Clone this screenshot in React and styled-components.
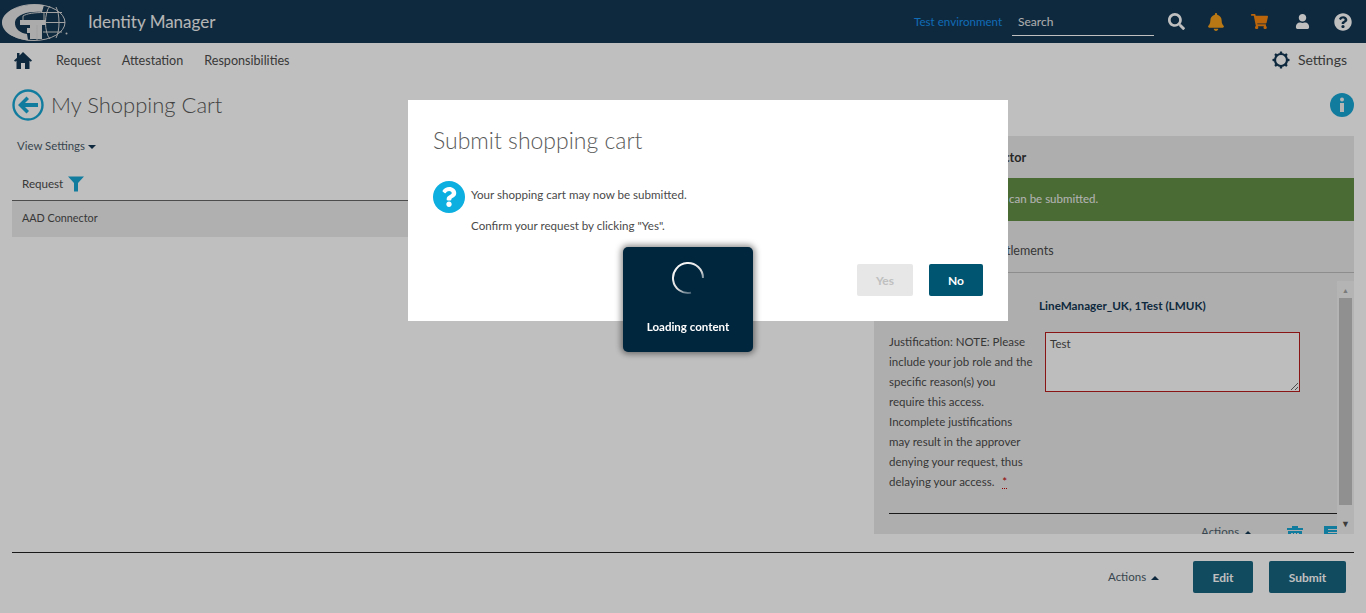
import React from "react";
import styled, { createGlobalStyle } from "styled-components";
import { FaSearch, FaBell, FaShoppingCart, FaUser, FaQuestionCircle, FaQuestion } from "react-icons/fa";

const GlobalStyle = createGlobalStyle`
  html, body { margin: 0; padding: 0; height: 100%; overflow: hidden; background: #fff; }
  body { font-family: "Lato", "Liberation Sans", sans-serif; color: #4a4a4a; }
  * { box-sizing: border-box; }
`;

function Logo() {
  return (
    <svg width="68" height="43" viewBox="0 0 68 43">
      <ellipse cx="34" cy="22.500" rx="31" ry="18" fill="none" stroke="#d8d8d8" strokeWidth="1" />
      <path d="M2 22.500C2 12 17 4.500 38 4.500L44 5 42 12C30 11 16 14 15 22 14.500 29 20 33 27 34L28 40 38 41C16 41 2 33 2 22.500Z" fill="#e4e4e4" />
      <path d="M20 20H46V25H42V39H30V33H27V28H30V25H20Z" fill="#e4e4e4" />
      <path d="M23 20V16C27 13.500 34 12.500 44 12.500V20M37 25V40M50 6C44 12 44 33 50 39M43 12.500H62M46 22.500H65M43 32H62M56 7C60 14 60 31 56 38" fill="none" stroke="#d8d8d8" strokeWidth="1" />
      <circle cx="66.500" cy="33.500" r="1" fill="#d8d8d8" />
    </svg>
  );
}

function Home() {
  return (
    <svg width="18" height="17" viewBox="0 0 18 17">
      <path d="M9 0L18 8.500 16.800 9.800 15.500 8.700V17H11V11H7V17H2.500V8.700L1.200 9.800 0 8.500 3 5.700V1H5.500V3.400Z" fill="#133753" />
    </svg>
  );
}

function Gear() {
  const teeth = [0, 45, 90, 135, 180, 225, 270, 315];
  return (
    <svg width="18" height="18" viewBox="0 0 18 18">
      <circle cx="9" cy="9" r="6" fill="none" stroke="#133753" strokeWidth="2.200" />
      <g fill="#133753">
        {teeth.map((a) => (
          <rect key={a} x="7.800" y="0.500" width="2.400" height="3" rx="0.600" transform={`rotate(${a} 9 9)`} />
        ))}
      </g>
    </svg>
  );
}

function BackArrow() {
  return (
    <svg width="32" height="32" viewBox="0 0 32 32">
      <circle cx="16" cy="16" r="14.500" fill="none" stroke="#19a6d4" strokeWidth="2.400" />
      <path d="M6 16L14.500 7.500 17 10 13 14H26V18H13L17 22 14.500 24.500Z" fill="#19a6d4" />
    </svg>
  );
}

function Info() {
  return (
    <svg width="24" height="24" viewBox="0 0 24 24">
      <circle cx="12" cy="12" r="12" fill="#19a6d4" />
      <circle cx="12" cy="6.500" r="2" fill="#f2f2f2" />
      <rect x="10" y="10" width="4" height="9" fill="#f2f2f2" />
    </svg>
  );
}

function Funnel() {
  return (
    <svg width="16" height="16" viewBox="0 0 16 16">
      <path d="M0 0.500H16L10 7V15.500H6V7Z" fill="#19a6d4" />
    </svg>
  );
}

function Trash() {
  return (
    <svg width="16" height="18" viewBox="0 0 16 18">
      <path d="M0 2H5V0H11V2H16V4H0ZM1 5H15V18H1ZM4 7V16H6V7ZM7 7V16H9V7ZM10 7V16H12V7Z" fill="#19a6d4" fillRule="evenodd" />
    </svg>
  );
}

function ListBox() {
  return (
    <svg width="14" height="18" viewBox="0 0 14 18">
      <path d="M0 0H14V18H0ZM4 3V4H14V3ZM4 6V7H14V6ZM4 9V10H14V9Z" fill="#19a6d4" fillRule="evenodd" />
    </svg>
  );
}

function Spinner() {
  return (
    <svg width="34" height="34" viewBox="0 0 34 34">
      <defs>
        <linearGradient id="spinFade" x1="0" y1="0" x2="0.800" y2="1">
          <stop offset="0" stopColor="#ffffff" />
          <stop offset="0.600" stopColor="#dddddd" />
          <stop offset="1" stopColor="#ffffff" stopOpacity="0.050" />
        </linearGradient>
      </defs>
      <path d="M32 17A15 15 0 1 0 20 31.700" fill="none" stroke="url(#spinFade)" strokeWidth="2" />
    </svg>
  );
}

const approverNote = [
  "Justification: NOTE: Please",
  "include your job role and the",
  "specific reason(s) you",
  "require this access.",
  "Incomplete justifications",
  "may result in the approver",
  "denying your request, thus",
];

export default function App() {
  return (
    <>
      <GlobalStyle />
      <Page>
        <TopBar>
          <LogoSlot><Logo /></LogoSlot>
          <Brand>Identity Manager</Brand>
          <TopRight>
            <EnvLabel>Test environment</EnvLabel>
            <SearchBox>Search</SearchBox>
            <TopIcons>
              <TopIcon $w={44} $color="#ffffff" $size={17}><FaSearch /></TopIcon>
              <TopIcon $w={36} $color="#f9a11b" $size={18}><FaBell /></TopIcon>
              <TopIcon $w={50} $color="#f9860f" $size={17}><FaShoppingCart /></TopIcon>
              <TopIcon $w={36} $color="#ffffff" $size={15}><FaUser /></TopIcon>
              <TopIcon $w={46} $color="#ffffff" $size={18}><FaQuestionCircle /></TopIcon>
            </TopIcons>
          </TopRight>
        </TopBar>

        <NavBar>
          <HomeSlot><Home /></HomeSlot>
          <NavLink>Request</NavLink>
          <NavLink>Attestation</NavLink>
          <NavLink>Responsibilities</NavLink>
          <SettingsLink><Gear /><span>Settings</span></SettingsLink>
        </NavBar>

        <TitleRow>
          <BackArrow />
          <PageTitle>My Shopping Cart</PageTitle>
          <InfoSlot><Info /></InfoSlot>
        </TitleRow>

        <Main>
          <LeftCol>
            <ViewSettings>View Settings <Caret /></ViewSettings>
            <TableHead>Request <Funnel /></TableHead>
            <TableRow>AAD Connector</TableRow>
          </LeftCol>

          <DetailPanel>
            <DetailTitle>Product AAD Connector</DetailTitle>
            <GreenBand>Your shopping cart can be submitted.</GreenBand>
            <TabRow>Show dependent entitlements</TabRow>
            <ScrollWrap>
              <ScrollBody>
                <ApproverRow>LineManager_UK, 1Test (LMUK)</ApproverRow>
                <FieldRow>
                  <FieldLabel>
                    {approverNote.map((line) => (
                      <div key={line}>{line}</div>
                    ))}
                    <div>delaying your access. <Required>*</Required></div>
                  </FieldLabel>
                  <FieldInput readOnly defaultValue="Test" />
                </FieldRow>
                <DetailActions>
                  <ActionsText>Actions <UpCaret /></ActionsText>
                  <ActionIcon $left={35}><Trash /></ActionIcon>
                  <ActionIcon $left={21}><ListBox /></ActionIcon>
                </DetailActions>
              </ScrollBody>
              <ScrollBar>
                <ScrollArrow>&#9650;</ScrollArrow>
                <ScrollThumb />
                <ScrollArrow $dark>&#9660;</ScrollArrow>
              </ScrollBar>
            </ScrollWrap>
          </DetailPanel>
        </Main>

        <Footer>
          <FooterActions>Actions <UpCaret /></FooterActions>
          <FootButton $width={60}>Edit</FootButton>
          <FootButton $width={77}>Submit</FootButton>
        </Footer>
      </Page>

      <Overlay />

      <Modal>
        <ModalTitle>Submit shopping cart</ModalTitle>
        <ModalBody>
          <QuestionBadge><FaQuestion /></QuestionBadge>
          <ModalText>
            <p>Your shopping cart may now be submitted.</p>
            <p>Confirm your request by clicking "Yes".</p>
          </ModalText>
        </ModalBody>
        <ModalButtons>
          <DialogButton $disabled>Yes</DialogButton>
          <DialogButton>No</DialogButton>
        </ModalButtons>
      </Modal>

      <LoadingBox>
        <Spinner />
        <LoadingText>Loading content</LoadingText>
      </LoadingBox>
    </>
  );
}

const Page = styled.div`
  height: 613px;
  display: flex;
  flex-direction: column;
  overflow: hidden;
`;

const TopBar = styled.header`
  height: 43px;
  flex: none;
  display: flex;
  align-items: center;
  background: #133753;
`;

const LogoSlot = styled.div`
  width: 88px;
  height: 43px;
`;

const Brand = styled.div`
  font-size: 17px;
  color: #f2f2f2;
`;

const TopRight = styled.div`
  margin-left: auto;
  display: flex;
  align-items: center;
`;

const EnvLabel = styled.span`
  font-size: 11.600px;
  color: #1690f0;
  width: 98px;
`;

const SearchBox = styled.div`
  width: 142px;
  height: 28px;
  padding: 6px 6px 0;
  font-size: 12px;
  color: #e8e8e8;
  border-bottom: 1px solid #ffffff;
`;

const TopIcons = styled.div`
  display: flex;
  align-items: center;
  width: 212px;
`;

const TopIcon = styled.span`
  width: ${(p) => p.$w}px;
  height: 24px;
  flex: none;
  display: flex;
  align-items: center;
  justify-content: center;
  color: ${(p) => p.$color};
  font-size: ${(p) => p.$size}px;
`;

const NavBar = styled.nav`
  height: 35px;
  flex: none;
  display: flex;
  align-items: center;
  padding: 0 19px 0 14px;
  font-size: 12.600px;
`;

const HomeSlot = styled.span`
  width: 42px;
  display: flex;
`;

const NavLink = styled.span`
  margin-right: 21px;
  color: #4c4c4c;
`;

const SettingsLink = styled.span`
  margin-left: auto;
  margin-top: -2px;
  display: flex;
  align-items: center;
  gap: 8px;
  font-size: 14px;
  color: #4c4c4c;
`;

const TitleRow = styled.div`
  height: 58px;
  flex: none;
  display: flex;
  align-items: flex-start;
  padding: 11px 12px 0;
`;

const PageTitle = styled.h1`
  margin: 0 0 0 7px;
  font-size: 22px;
  line-height: 32px;
  font-weight: 300;
  color: #5a5a5a;
`;

const InfoSlot = styled.span`
  margin-left: auto;
  margin-top: 4px;
  display: flex;
`;

const Main = styled.main`
  height: 398px;
  flex: none;
  display: flex;
  justify-content: space-between;
  padding: 0 12px;
`;

const LeftCol = styled.section`
  width: 848px;
`;

const ViewSettings = styled.div`
  padding: 3px 0 0 5px;
  height: 33px;
  font-size: 11.400px;
  line-height: 14px;
  color: #4c5d6a;
`;

const Caret = styled.i`
  display: inline-block;
  margin-left: 0;
  vertical-align: middle;
  border: 4px solid transparent;
  border-top-color: #133753;
  border-bottom-width: 0;
`;

const UpCaret = styled.i`
  display: inline-block;
  margin-left: 2px;
  vertical-align: middle;
  border: 4px solid transparent;
  border-bottom-color: #133753;
  border-top-width: 0;
`;

const TableHead = styled.div`
  height: 32px;
  display: flex;
  align-items: center;
  gap: 5px;
  padding: 0 10px 2px;
  font-size: 11.600px;
  color: #4c4c4c;
  border-bottom: 1px solid #666666;
`;

const TableRow = styled.div`
  height: 36px;
  display: flex;
  align-items: center;
  padding: 0 10px 3px;
  font-size: 10.800px;
  background: #ebebeb;
`;

const DetailPanel = styled.section`
  width: 480px;
  background: #e9e9e9;
  display: flex;
  flex-direction: column;
  overflow: hidden;
`;

const DetailTitle = styled.div`
  height: 42px;
  flex: none;
  display: flex;
  align-items: center;
  padding: 0 15px;
  font-size: 12.700px;
  font-weight: 700;
  color: #333333;
`;

const GreenBand = styled.div`
  height: 43px;
  flex: none;
  display: flex;
  align-items: center;
  padding: 0 0 2px 38px;
  font-size: 11.500px;
  color: #f0f0f0;
  background: #658f47;
`;

const TabRow = styled.div`
  height: 52px;
  flex: none;
  display: flex;
  align-items: center;
  padding: 8px 15px 0;
  font-size: 12.500px;
  border-bottom: 1px solid #bcbcbc;
`;

const ScrollWrap = styled.div`
  flex: 1;
  min-height: 0;
  display: flex;
`;

const ScrollBody = styled.div`
  flex: 1;
  min-width: 0;
  padding: 0 0 0 15px;
  overflow: hidden;
`;

const ApproverRow = styled.div`
  height: 59px;
  padding: 23px 0 0 150px;
  font-size: 11.700px;
  line-height: 18px;
  font-weight: 700;
  color: #133753;
`;

const FieldRow = styled.div`
  display: flex;
  align-items: flex-start;
  height: 182px;
  border-bottom: 1px solid #222222;
`;

const FieldLabel = styled.div`
  width: 156px;
  flex: none;
  font-size: 11.500px;
  line-height: 20px;
  white-space: nowrap;
`;

const Required = styled.span`
  color: #c40000;
  margin-left: 5px;
  border-bottom: 1px dotted #c40000;
`;

const FieldInput = styled.textarea`
  width: 255px;
  height: 60px;
  flex: none;
  margin: 0;
  padding: 4px;
  font-family: inherit;
  font-size: 11.500px;
  color: #4a4a4a;
  background: #fdfdfd;
  border: 1px solid #b81c1c;
  outline: none;
`;

const DetailActions = styled.div`
  display: flex;
  align-items: flex-start;
  padding: 11px 0 0 312px;
`;

const ActionIcon = styled.span`
  display: flex;
  margin-left: ${(p) => p.$left}px;
  margin-top: 1px;
`;

const ActionsText = styled.span`
  font-size: 11.500px;
  color: #4c5d6a;
  white-space: nowrap;
`;

const ScrollBar = styled.div`
  width: 17px;
  flex: none;
  display: flex;
  flex-direction: column;
  background: #f1f1f1;
  margin-top: 8px;
  padding-bottom: 2px;
`;

const ScrollArrow = styled.div`
  height: 17px;
  display: flex;
  align-items: center;
  justify-content: center;
  font-size: ${(p) => (p.$dark ? "9px" : "7px")};
  color: ${(p) => (p.$dark ? "#505050" : "#a3a3a3")};
`;

const ScrollThumb = styled.div`
  flex: 1;
  margin: 0 2px 10px;
  background: #c1c1c1;
`;

const Footer = styled.footer`
  flex: none;
  height: 50px;
  margin: 18px 12px 0;
  padding: 8px 8px 0 0;
  display: flex;
  align-items: flex-start;
  justify-content: flex-end;
  border-top: 1px solid #222222;
`;

const FooterActions = styled(ActionsText)`
  margin: 9px 20px 0 0;
  width: 65px;
`;

const FootButton = styled.div`
  width: ${(p) => p.$width}px;
  height: 32px;
  margin-right: 16px;
  display: flex;
  align-items: center;
  justify-content: center;
  font-size: 12px;
  font-weight: 700;
  color: #ffffff;
  background: #17647f;
  border-radius: 2px;

  &:last-child {
    margin-right: 0;
  }
`;

const Overlay = styled.div`
  position: fixed;
  inset: 0;
  background: rgba(0, 0, 0, 0.25);
`;

const Modal = styled.div`
  position: fixed;
  left: 408px;
  top: 100px;
  width: 600px;
  height: 221px;
  padding: 25px 25px 0;
  display: flex;
  flex-direction: column;
  background: #ffffff;
`;

const ModalTitle = styled.h2`
  margin: 0;
  height: 56px;
  font-size: 23px;
  line-height: 30px;
  font-weight: 300;
  color: #5a5a5a;
`;

const ModalBody = styled.div`
  display: flex;
  gap: 6px;
  height: 83px;
`;

const QuestionBadge = styled.span`
  width: 32px;
  height: 32px;
  border-radius: 50%;
  display: flex;
  align-items: center;
  justify-content: center;
  color: #ffffff;
  background: #0cafe0;
  font-size: 20px;
`;

const ModalText = styled.div`
  font-size: 11.600px;
  line-height: 16px;

  p {
    margin: 6px 0 15px;
  }
`;

const ModalButtons = styled.div`
  display: flex;
  justify-content: flex-end;
  gap: 16px;
`;

const DialogButton = styled.div`
  width: ${(p) => (p.$disabled ? "56px" : "54px")};
  height: 32px;
  display: flex;
  align-items: center;
  justify-content: center;
  border-radius: 2px;
  font-size: 12px;
  font-weight: 700;
  color: ${(p) => (p.$disabled ? "#c0c0c0" : "#ffffff")};
  background: ${(p) => (p.$disabled ? "#e7e7e7" : "#005670")};
`;

const LoadingBox = styled.div`
  position: fixed;
  left: 623px;
  top: 247px;
  width: 130px;
  height: 105px;
  padding-top: 14px;
  display: flex;
  flex-direction: column;
  align-items: center;
  gap: 25px;
  background: #00263e;
  border-radius: 5px;
  box-shadow: 0 0 6px 2px rgba(0, 0, 0, 0.45);
`;

const LoadingText = styled.div`
  font-size: 11.500px;
  font-weight: 700;
  color: #ffffff;
`;
